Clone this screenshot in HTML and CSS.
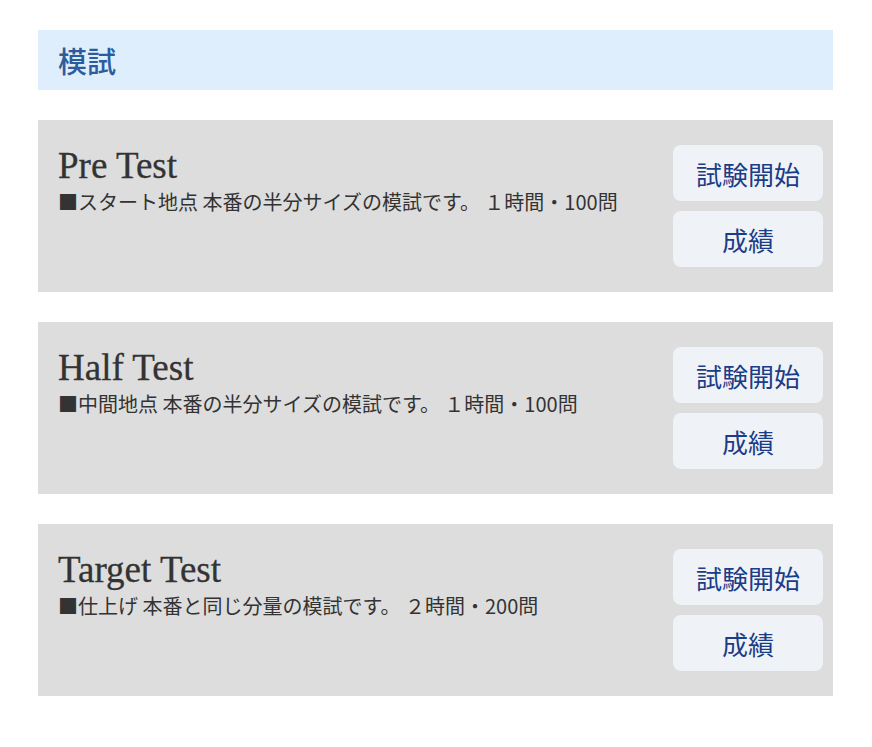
FILE: index.html
```html
<!DOCTYPE html>
<html lang="ja">
<head>
<meta charset="utf-8">
<link rel="stylesheet" href="styles.css">
</head>
<body>
<div class="page">
  <h1 class="section-title">模試</h1>
  <div class="card">
    <div class="info">
      <h2 class="test-name">Pre Test</h2>
      <p class="desc">■スタート地点 本番の半分サイズの模試です。 １時間・100問</p>
    </div>
    <div class="actions">
      <button class="btn">試験開始</button>
      <button class="btn">成績</button>
    </div>
  </div>
  <div class="card">
    <div class="info">
      <h2 class="test-name">Half Test</h2>
      <p class="desc">■中間地点 本番の半分サイズの模試です。 １時間・100問</p>
    </div>
    <div class="actions">
      <button class="btn">試験開始</button>
      <button class="btn">成績</button>
    </div>
  </div>
  <div class="card">
    <div class="info">
      <h2 class="test-name">Target Test</h2>
      <p class="desc">■仕上げ 本番と同じ分量の模試です。 ２時間・200問</p>
    </div>
    <div class="actions">
      <button class="btn">試験開始</button>
      <button class="btn">成績</button>
    </div>
  </div>
</div>
</body>
</html>
```
FILE: styles.css
```css
html, body {
  margin: 0;
  padding: 0;
  background: #ffffff;
}
.page {
  padding: 30px 39px 30px 38px;
  display: flex;
  flex-direction: column;
  gap: 30px;
  font-family: "Noto Sans CJK JP", "Noto Sans", sans-serif;
}
.section-title {
  margin: 0;
  height: 60px;
  box-sizing: border-box;
  padding: 0 20px;
  display: flex;
  align-items: center;
  background: #deeefd;
  color: #2c5c9c;
  font-size: 29px;
  font-weight: 500;
}
.card {
  background: #dddddd;
  height: 172px;
  box-sizing: border-box;
  padding: 25px 10px 25px 20px;
  display: flex;
  justify-content: space-between;
  align-items: flex-start;
}
.test-name {
  margin: 0;
  font-family: "Liberation Serif", "Times New Roman", serif;
  font-weight: 400;
  font-size: 37px;
  line-height: 42px;
  color: #333333;
  -webkit-text-stroke: 0.3px #333333;
}
.desc {
  margin: 2px 0 0;
  font-size: 20px;
  line-height: 26px;
  color: #333333;
}
.actions {
  display: flex;
  flex-direction: column;
  gap: 10px;
}
.btn {
  width: 150px;
  height: 56px;
  border: none;
  border-radius: 8px;
  background: #eff3f8;
  color: #1b3c86;
  font-family: "Noto Sans CJK JP", "Noto Sans", sans-serif;
  font-size: 26px;
  padding: 0;
  cursor: pointer;
}
```
